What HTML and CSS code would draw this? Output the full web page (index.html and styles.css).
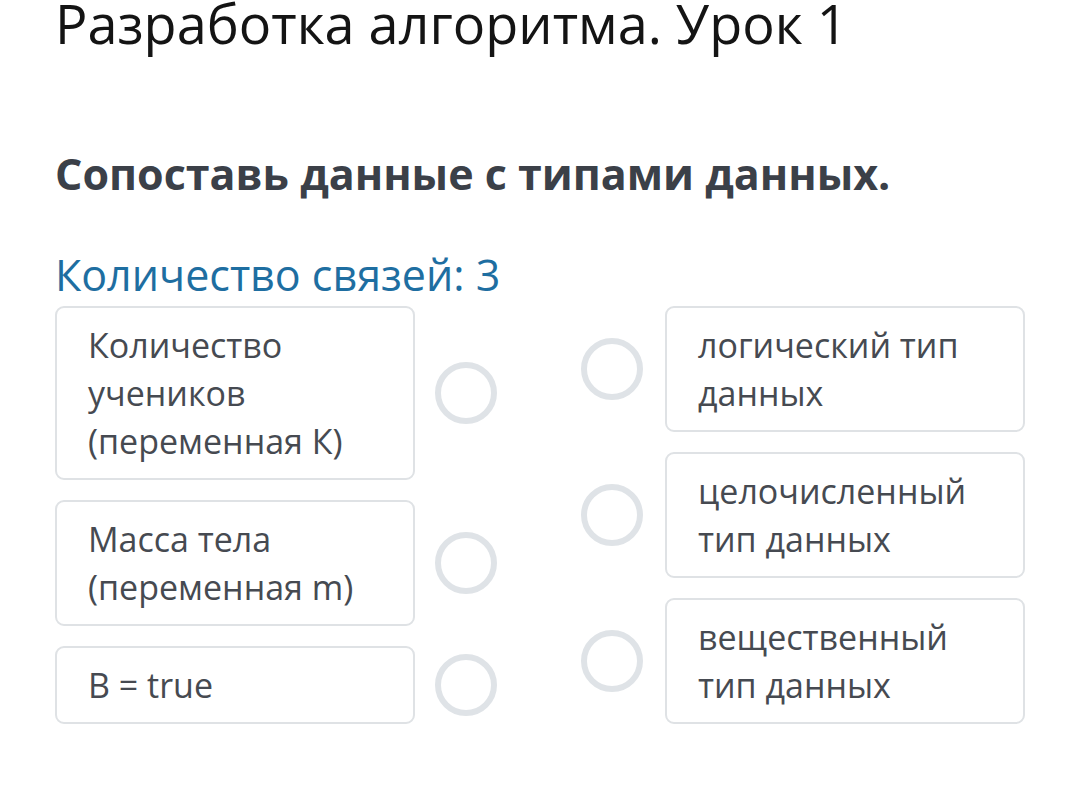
FILE: index.html
```html
<!DOCTYPE html>
<html lang="ru">
<head>
<meta charset="utf-8">
<link rel="stylesheet" href="styles.css">
</head>
<body>
<div class="page">
  <h1 class="title">Разработка алгоритма. Урок 1</h1>
  <h2 class="question">Сопоставь данные с типами данных.</h2>
  <div class="count">Количество связей: 3</div>
  <div class="match">
    <div class="col col-left">
      <div class="row">
        <div class="card">Количество учеников (переменная К)</div>
        <span class="dot"></span>
      </div>
      <div class="row">
        <div class="card">Масса тела (переменная m)</div>
        <span class="dot"></span>
      </div>
      <div class="row">
        <div class="card">B = true</div>
        <span class="dot"></span>
      </div>
    </div>
    <div class="col col-right">
      <div class="row">
        <span class="dot"></span>
        <div class="card">логический тип данных</div>
      </div>
      <div class="row">
        <span class="dot"></span>
        <div class="card">целочисленный тип данных</div>
      </div>
      <div class="row">
        <span class="dot"></span>
        <div class="card">вещественный тип данных</div>
      </div>
    </div>
  </div>
</div>
</body>
</html>
```

FILE: styles.css
```css
* { box-sizing: border-box; }
html, body { margin: 0; padding: 0; background: #ffffff; }
body { font-family: "Open Sans", "Noto Sans", sans-serif; }
.page { padding-left: 55px; width: 1080px; }
.title {
  margin: 0;
  font-size: 54px;
  font-weight: 400;
  line-height: 46px;
  color: #141414;
}
.question {
  margin: 98px 0 0 0;
  font-size: 43px;
  font-weight: 700;
  line-height: 60px;
  color: #3b4048;
}
.count {
  margin-top: 46px;
  font-size: 43px;
  line-height: 50px;
  color: #1e6ea1;
}
.match {
  display: flex;
  gap: 84px;
  margin-top: 6px;
}
.col { display: flex; flex-direction: column; gap: 20px; }
.row { display: flex; align-items: center; gap: 20px; }
.col-right .row { gap: 22px; }
.card {
  width: 360px;
  border: 2px solid #dfe2e5;
  border-radius: 9px;
  padding: 13px 20px 13px 31px;
  font-size: 34px;
  line-height: 48px;
  color: #464a51;
}
.dot {
  width: 62px;
  height: 62px;
  border: 6px solid #dfe3e7;
  border-radius: 50%;
  flex: none;
}
```
